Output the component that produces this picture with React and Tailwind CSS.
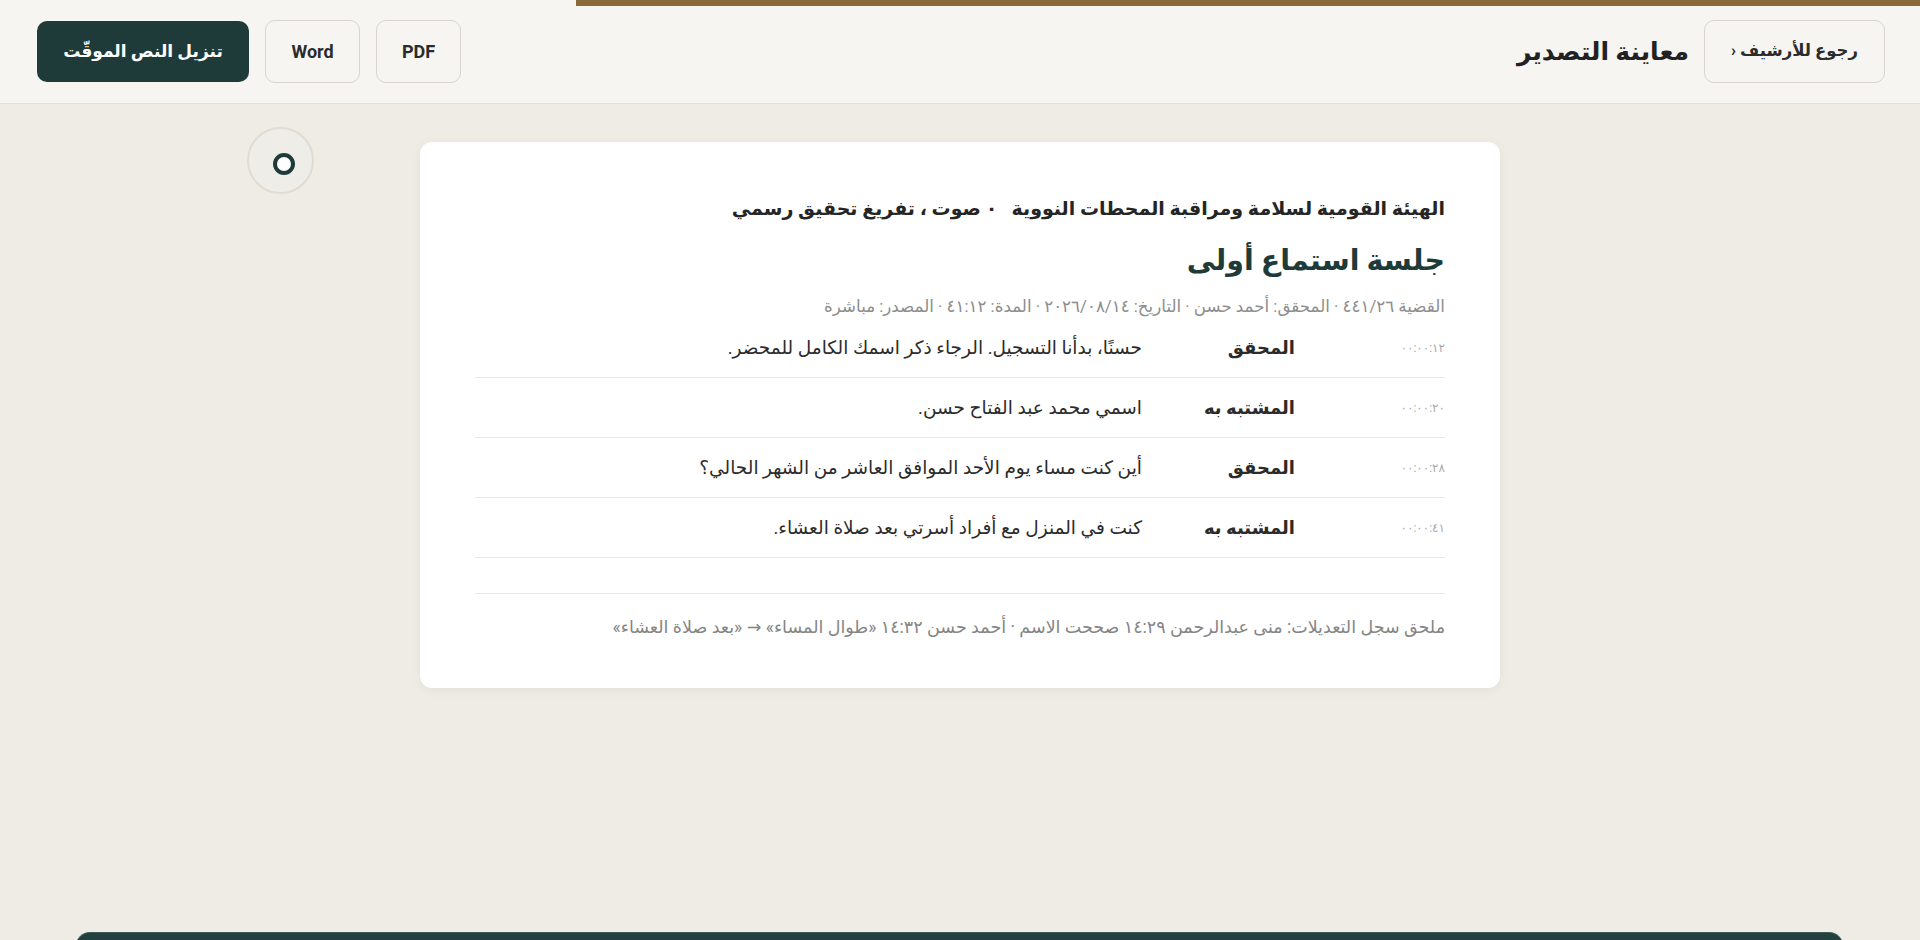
const rows = [
  { time: '٠٠:٠٠:١٢', speaker: 'المحقق', text: 'حسنًا، بدأنا التسجيل. الرجاء ذكر اسمك الكامل للمحضر.' },
  { time: '٠٠:٠٠:٢٠', speaker: 'المشتبه به', text: 'اسمي محمد عبد الفتاح حسن.' },
  { time: '٠٠:٠٠:٢٨', speaker: 'المحقق', text: 'أين كنت مساء يوم الأحد الموافق العاشر من الشهر الحالي؟' },
  { time: '٠٠:٠٠:٤١', speaker: 'المشتبه به', text: 'كنت في المنزل مع أفراد أسرتي بعد صلاة العشاء.' },
]

export default function App() {
  return (
    <div
      dir="rtl"
      className="relative min-h-screen overflow-hidden bg-[#eeece5] font-['Roboto','DejaVu_Sans',sans-serif] text-[#2b2b2b]"
    >
      {/* header */}
      <header className="relative flex h-[104px] items-center justify-between border-b border-[#e3e0d9] bg-[#f6f5f1] pl-[37px] pr-[35px]">
        <div className="absolute left-0 top-0 h-[6px] w-full">
          <div className="h-full w-[70%] bg-[#8a6a3c]" />
        </div>

        <div className="flex items-center gap-[15px]">
          <button className="flex h-[63px] w-[181px] items-center justify-center rounded-[10px] border border-[#d8d5ce] bg-[#f6f5f1] text-[16.5px] font-bold text-[#2b2b2b]">
            رجوع للأرشيف ‹
          </button>
          <h1 className="text-[25px] font-bold text-[#222]">معاينة التصدير</h1>
        </div>

        <div className="flex items-center gap-4">
          <button className="flex h-[63px] w-[85px] items-center justify-center rounded-[10px] border border-[#d8d5ce] bg-[#f6f5f1] text-[18px] font-bold text-[#2b2b2b]">
            PDF
          </button>
          <button className="flex h-[63px] w-[95px] items-center justify-center rounded-[10px] border border-[#d8d5ce] bg-[#f6f5f1] text-[18px] font-bold text-[#2b2b2b]">
            Word
          </button>
          <button className="flex h-[61px] w-[212px] items-center justify-center rounded-[10px] bg-[#1e3b39] text-[17px] font-bold text-white">
            تنزيل النص الموقّت
          </button>
        </div>
      </header>

      {/* floating record control */}
      <div className="absolute left-[247px] top-[127px] flex h-[67px] w-[67px] items-center justify-center rounded-full border-2 border-[#e0dcd4] bg-[#efede7]">
        <div className="h-[22px] w-[22px] translate-x-[3px] translate-y-[3px] rounded-full border-[4px] border-[#1e3b39] bg-white" />
      </div>

      <main className="flex justify-center pt-[38px] pb-[80px]">
        <div className="w-[1080px] rounded-xl bg-white px-[55px] pb-[50px] pt-[52px] shadow-[0_2px_12px_rgba(0,0,0,0.05)]">
          <p className="text-[19px] font-bold leading-[30px] text-[#252525]">
            الهيئة القومية لسلامة ومراقبة المحطات النووية&nbsp;&nbsp; ٠ صوت ، تفريغ تحقيق رسمي
          </p>
          <h2 className="mt-[17px] text-[28.5px] font-bold leading-[40px] text-[#1e3b39]">جلسة استماع أولى</h2>
          <p className="mt-[15px] text-[16.7px] leading-[22px] text-[#8d8d8d]">
            القضية ٤٤١/٢٦ · المحقق: أحمد حسن · التاريخ: ٢٠٢٦/٠٨/١٤ · المدة: ٤١:١٢ · المصدر: مباشرة
          </p>

          <div>
            {rows.map((r) => (
              <div
                key={r.time}
                className="grid grid-cols-[126px_129px_1fr] items-center gap-6 border-b border-[#ebe9e4] py-[17.5px] leading-[24px]"
              >
                <span dir="ltr" className="text-right text-[12px] text-[#a9a9a9]">{r.time}</span>
                <span className="text-[18px] font-bold text-[#2b2b2b]">{r.speaker}</span>
                <span className="text-[18.5px] text-[#2b2b2b]">{r.text}</span>
              </div>
            ))}
          </div>

          <div className="mt-[35px] border-t border-[#ebe9e4] pt-[22px]">
            <p className="text-[17.5px] leading-[22px] text-[#858585]">
              ملحق سجل التعديلات: منى عبدالرحمن ١٤:٢٩ صححت الاسم · أحمد حسن ١٤:٣٢ «طوال المساء» → «بعد صلاة العشاء»
            </p>
          </div>
        </div>
      </main>

      {/* bottom player bar, mostly below the fold */}
      <div className="fixed bottom-[-60px] left-[76px] right-[77px] h-[68px] rounded-t-[14px] border-t border-[#3d5a57] bg-[#22403e]" />
    </div>
  )
}
